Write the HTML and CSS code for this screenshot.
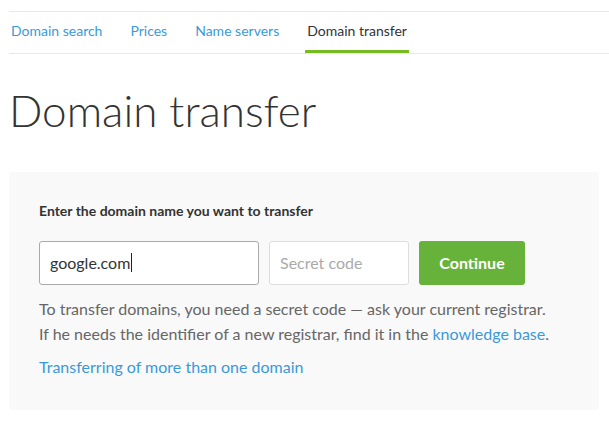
FILE: index.html
```html
<!DOCTYPE html>
<html lang="en">
<head>
<meta charset="utf-8">
<title>Domain transfer</title>
<link rel="stylesheet" href="styles.css">
</head>
<body>
<div class="page">
  <nav class="tabs">
    <a class="tab" href="#">Domain search</a>
    <a class="tab" href="#">Prices</a>
    <a class="tab" href="#">Name servers</a>
    <a class="tab active" href="#">Domain transfer</a>
  </nav>
  <h1 class="title">Domain transfer</h1>
  <section class="card">
    <div class="label">Enter the domain name you want to transfer</div>
    <div class="row">
      <div class="field domain"><span class="value">google.com</span><span class="caret"></span></div>
      <div class="field code"><span class="placeholder">Secret code</span></div>
      <button class="btn" type="button">Continue</button>
    </div>
    <p class="hint">To transfer domains, you need a secret code — ask your current registrar.<br>If he needs the identifier of a new registrar, find it in the <a class="link" href="#">knowledge base</a>.</p>
    <a class="link more" href="#">Transferring of more than one domain</a>
  </section>
</div>
</body>
</html>
```
FILE: styles.css
```css
* { box-sizing: border-box; }
html, body { margin: 0; padding: 0; background: #fff; }
body {
  font-family: Lato, "Open Sans", "Liberation Sans", sans-serif;
  color: #333;
}
.page {
  padding: 11px 10px 0 9px;
}
.tabs {
  display: flex;
  gap: 24px;
  border-top: 1px solid #e8e8e8;
  border-bottom: 1px solid #e8e8e8;
  margin-right: -10px;
}
.tab {
  display: block;
  padding: 9px 2px;
  font-size: 14px;
  line-height: 20px;
  color: #3a9ad9;
  text-decoration: none;
  border-bottom: 3px solid transparent;
}
.tab.active {
  color: #333;
  border-bottom-color: #76bc21;
}
.title {
  margin: 30px 0 0;
  font-size: 44px;
  font-weight: 300;
  line-height: 53px;
  color: #333;
}
.card {
  margin-top: 35px;
  background: #f9f9f9;
  border-radius: 3px;
  padding: 31px 30px 31px 30px;
}
.label {
  font-size: 14px;
  font-weight: 700;
  line-height: 16px;
  color: #333;
}
.row {
  display: flex;
  gap: 10px;
  margin-top: 22px;
}
.field {
  height: 44px;
  background: #fff;
  border-radius: 3px;
  display: flex;
  align-items: center;
  padding: 0 10px 1px;
  font-size: 16px;
}
.domain {
  width: 220px;
  border: 1px solid #aaa;
  color: #333;
}
.caret {
  display: inline-block;
  width: 1px;
  height: 19px;
  background: #222;
  margin-left: 1px;
}
.code {
  width: 140px;
  border: 1px solid #ddd;
}
.placeholder { color: #aaa; }
.btn {
  width: 106px;
  height: 44px;
  border: 0;
  border-radius: 3px;
  background: #67b23b;
  color: #fff;
  font-family: inherit;
  font-size: 16px;
  font-weight: 700;
  padding: 0 0 1px;
}
.hint {
  margin: 11px 0 0;
  font-size: 16px;
  line-height: 25px;
  color: #666;
}
.link {
  color: #3a9ad9;
  text-decoration: none;
}
.more {
  display: block;
  margin-top: 8px;
  font-size: 16px;
  line-height: 25px;
}
```
